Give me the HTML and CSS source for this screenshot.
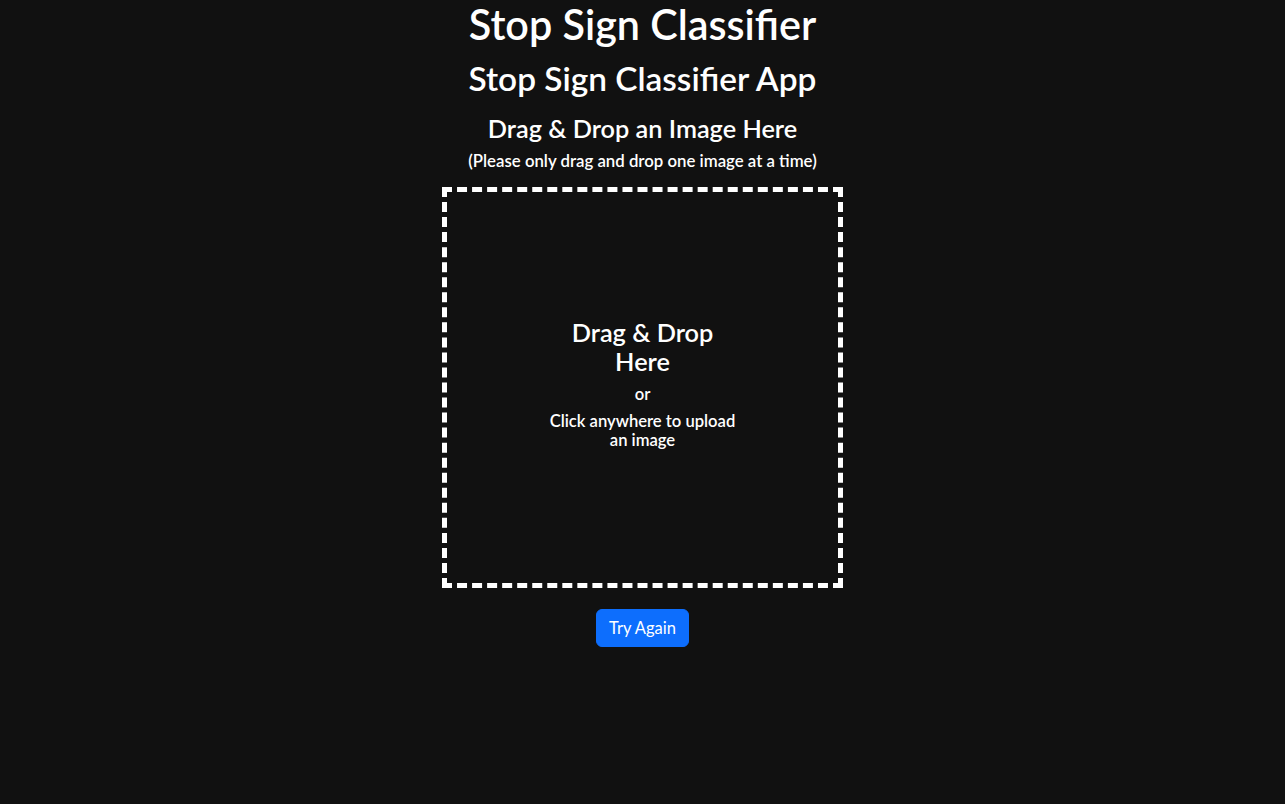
FILE: index.html
```html
<!DOCTYPE html>
<html lang="en">
<head>
<meta charset="utf-8">
<title>Stop Sign Classifier</title>
<link rel="stylesheet" href="styles.css">
</head>
<body>
<main class="app">
  <h1 class="title">Stop Sign Classifier</h1>
  <h2 class="subtitle">Stop Sign Classifier App</h2>
  <section class="uploader">
    <h4 class="uploader-title">Drag &amp; Drop an Image Here</h4>
    <h6 class="uploader-note">(Please only drag and drop one image at a time)</h6>
    <div class="dropzone">
      <div class="dropzone-inner">
        <h4 class="dropzone-title">Drag &amp; Drop Here</h4>
        <p class="dropzone-or">or</p>
        <p class="dropzone-click">Click anywhere to upload an image</p>
      </div>
    </div>
    <button class="btn-primary" type="button">Try Again</button>
  </section>
</main>
</body>
</html>
```
FILE: styles.css
```css
* { box-sizing: border-box; }
html, body { margin: 0; padding: 0; }
body {
  background: #111111;
  color: #ffffff;
  font-family: "Lato", "Open Sans", "Liberation Sans", sans-serif;
  font-size: 16px;
  line-height: 1.5;
  text-align: center;
  min-height: 804px;
}
.app {
  display: flex;
  flex-direction: column;
  align-items: center;
}
h1, h2, h4, h6 { margin: 0 0 8px 0; font-weight: 600; line-height: 1.2; }
.title { font-size: 41.3px; }
.subtitle { font-size: 33.4px; margin-bottom: 7px; }
.uploader {
  display: flex;
  flex-direction: column;
  align-items: center;
  margin-top: 8px;
}
.uploader-title { font-size: 25.3px; margin-bottom: 8px; }
.uploader-note { font-size: 16.8px; margin-bottom: 16px; }
.dropzone {
  width: 401px;
  height: 401px;
  border: 5px dashed #ffffff;
  display: flex;
  align-items: center;
  justify-content: center;
}
.dropzone-inner { width: 195px; padding-bottom: 7px; }
.dropzone-title { font-size: 25.3px; line-height: 29px; margin-bottom: 6px; }
.dropzone-or { margin: 0 0 6px 0; line-height: 24px; font-size: 16.6px; font-weight: 600; }
.dropzone-click { margin: 0; line-height: 19.5px; font-size: 16.6px; font-weight: 600; }
.btn-primary {
  margin-top: 21px;
  background: #0d6efd;
  border: 1px solid #0d6efd;
  color: #ffffff;
  border-radius: 6px;
  font-family: inherit;
  font-size: 16.5px;
  line-height: 24px;
  padding: 6px 12px;
  height: 38px;
  cursor: pointer;
}
```
